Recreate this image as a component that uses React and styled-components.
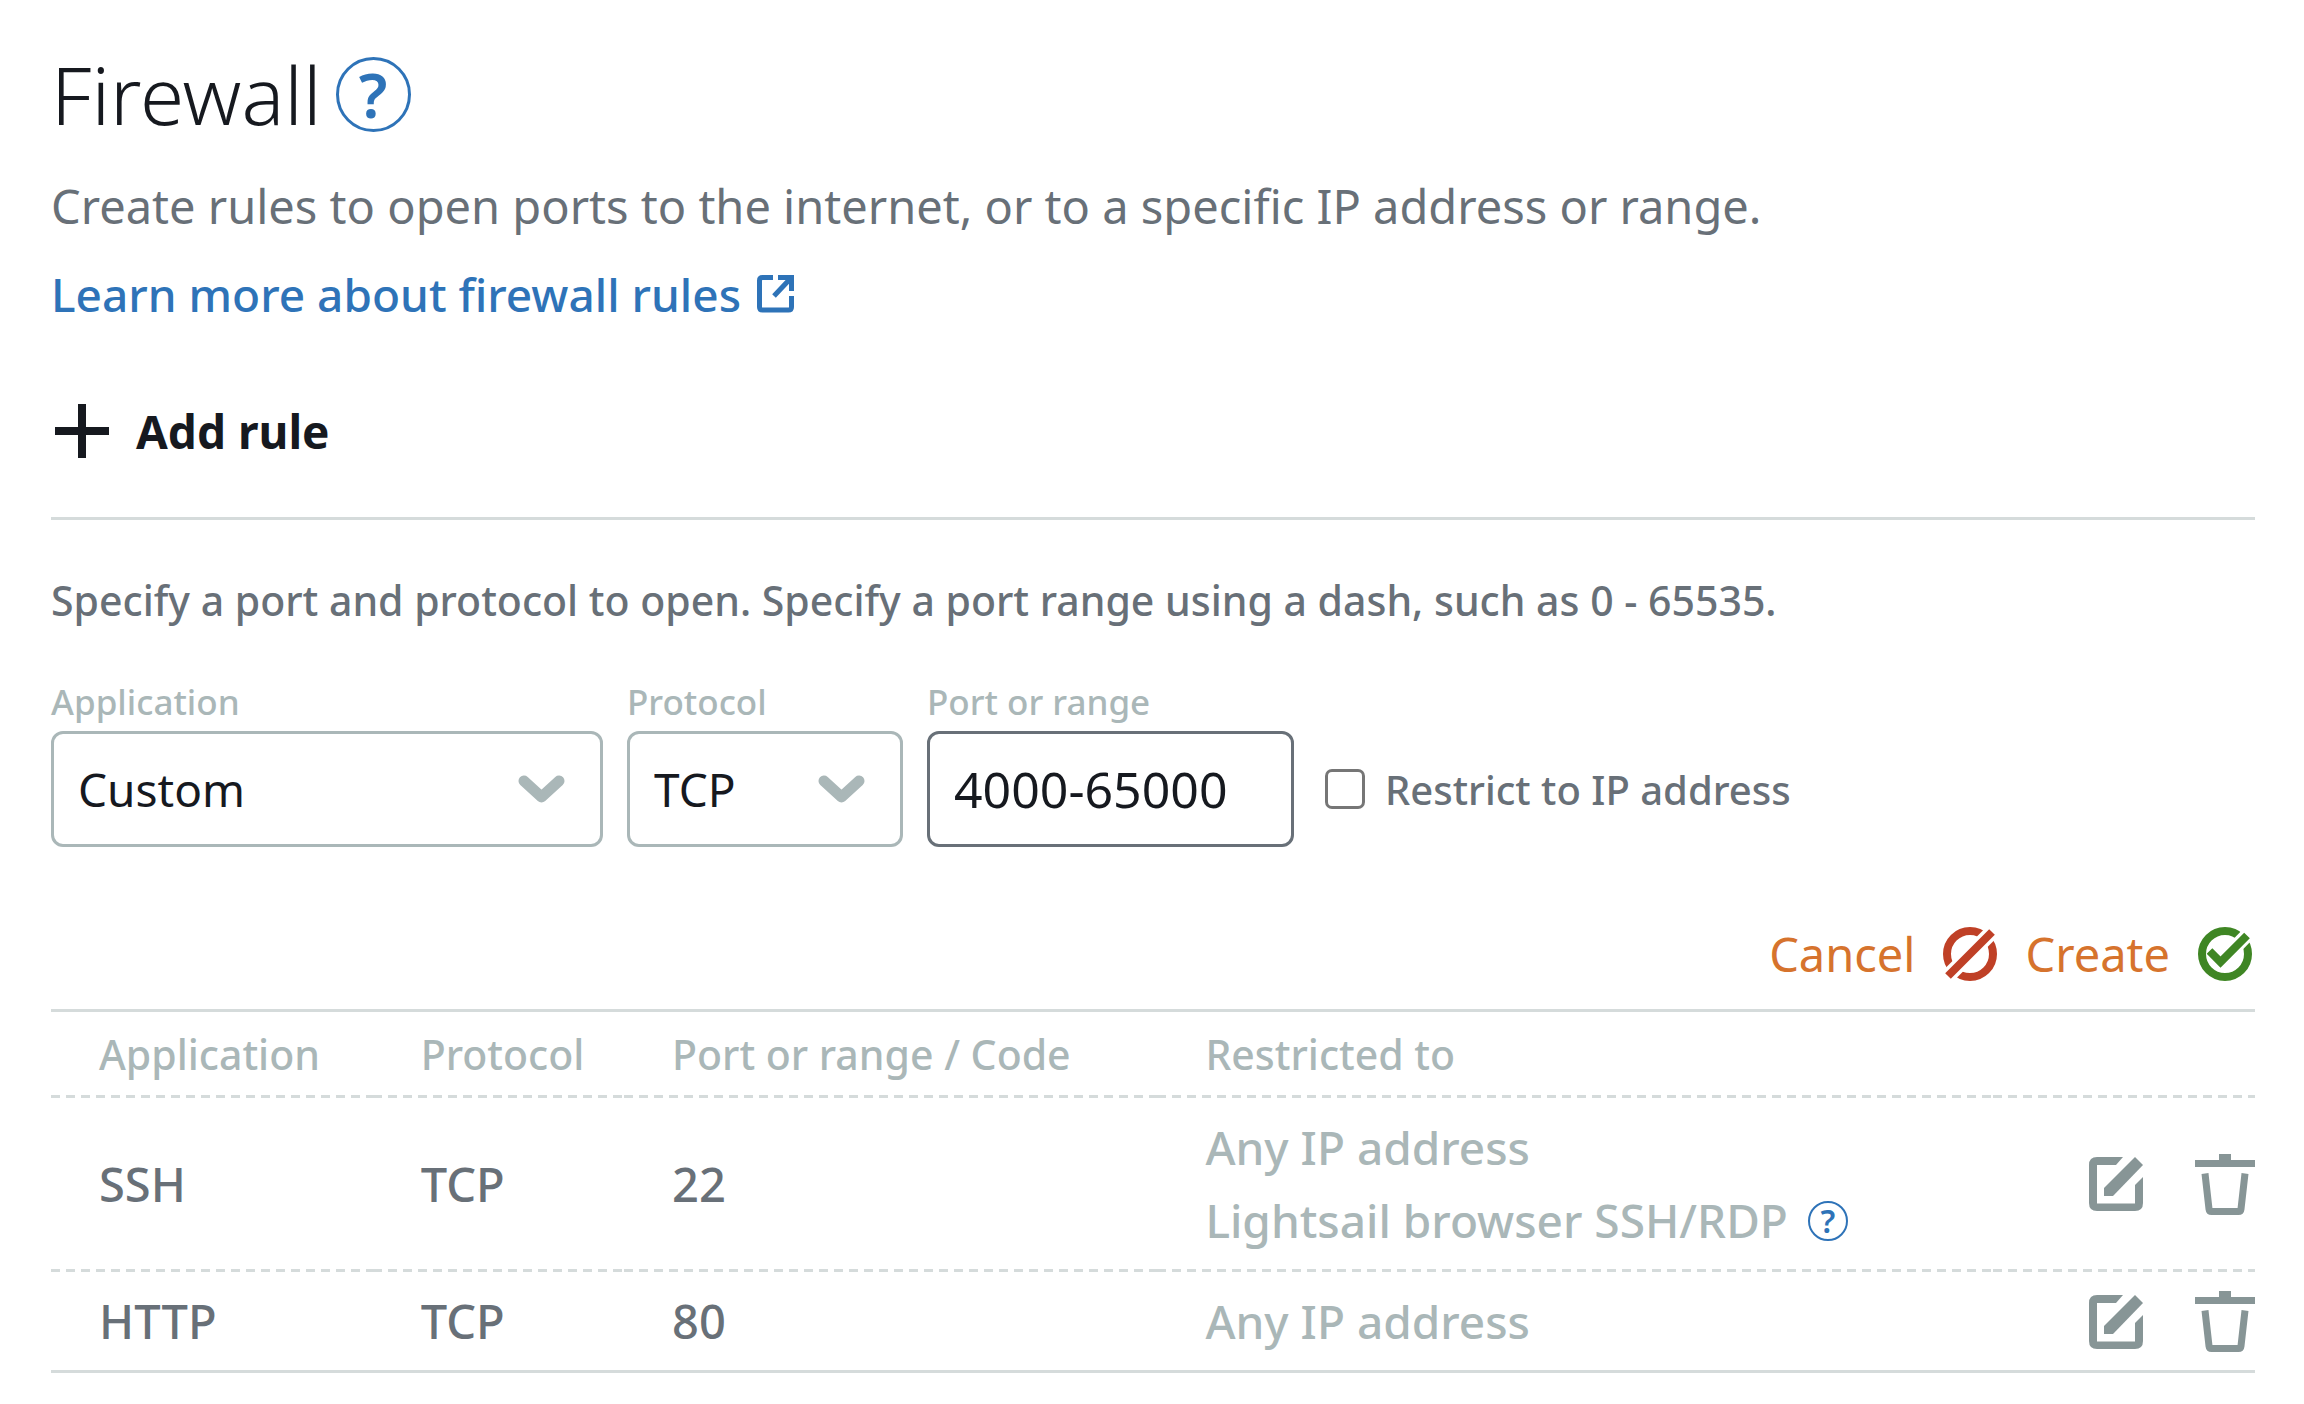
import React from "react";
import styled, { createGlobalStyle } from "styled-components";

const color = {
  ink: "#16191f",
  text: "#687078",
  muted: "#aab7b8",
  line: "#d5dbdb",
  icon: "#879596",
  blue: "#2e73b8",
  orange: "#d6732d",
  red: "#bf4026",
  green: "#3f8624",
};

const GlobalStyle = createGlobalStyle`
  *, *::before, *::after { box-sizing: border-box; }
  body {
    margin: 0;
    background: #fff;
    color: ${color.text};
    font-family: "Noto Sans", "Open Sans", sans-serif;
  }
  button, input, select { font: inherit; color: inherit; margin: 0; }
  button { padding: 0; border: 0; background: none; cursor: pointer; }
  svg { display: block; flex: none; }
`;

const Page = styled.main`
  padding: 54px 49px 31px 51px;
`;

const TitleRow = styled.header`
  display: flex;
  align-items: center;
  gap: 14px;
`;

const Title = styled.h1`
  margin: 0;
  color: ${color.ink};
  font-size: 80px;
  font-weight: 300;
  line-height: 80px;
`;

const HelpButton = styled.button`
  display: inline-flex;
  flex: none;
  align-items: center;
  justify-content: center;
  width: ${(p) => (p.$small ? 40 : 75)}px;
  height: ${(p) => (p.$small ? 40 : 75)}px;
  border: ${(p) => (p.$small ? 2 : 3)}px solid ${color.blue};
  border-radius: 50%;
  color: ${color.blue};
  font-size: ${(p) => (p.$small ? 32 : 62)}px;
  font-weight: 600;
  line-height: 1;
`;

const Intro = styled.p`
  margin: 40px 0 0;
  font-size: 47px;
  line-height: 64px;
`;

const LearnMore = styled.a`
  display: flex;
  align-items: center;
  gap: 16px;
  width: fit-content;
  margin-top: 24px;
  color: ${color.blue};
  font-size: 46px;
  font-weight: 500;
  line-height: 64px;
  text-decoration: none;
`;

const AddBar = styled.div`
  padding: 78px 0 59px;
  border-bottom: 3px solid ${color.line};
`;

const AddButton = styled.button`
  display: flex;
  align-items: center;
  gap: 27px;
  padding-left: 4px;
  color: ${color.ink};
  font-size: 46px;
  font-weight: 700;
  line-height: 54px;
`;

const Hint = styled.p`
  margin: 50px 0 49px;
  font-size: 41px;
  font-weight: 500;
  line-height: 60px;
`;

const Fields = styled.div`
  display: flex;
  align-items: flex-end;
  gap: 24px;
`;

const Field = styled.div`
  display: flex;
  flex-direction: column;
  gap: 6px;
  width: ${(p) => p.$width}px;
`;

const FieldLabel = styled.label`
  color: ${color.muted};
  font-size: 35px;
  font-weight: 500;
  line-height: 46px;
`;

const SelectBox = styled.div`
  display: grid;
  align-items: center;

  > * { grid-area: 1 / 1; }
  > svg { justify-self: end; margin-right: 38px; pointer-events: none; }
`;

const Select = styled.select`
  width: 100%;
  height: 116px;
  padding: 0 24px;
  border: 3px solid ${color.muted};
  border-radius: 12px;
  background: #fff;
  color: ${color.ink};
  font-size: 46px;
  appearance: none;
`;

const TextInput = styled.input`
  width: 100%;
  height: 116px;
  padding: 0 24px;
  border: 3px solid ${color.text};
  border-radius: 12px;
  background: #fff;
  color: ${color.ink};
  font-size: 50px;
`;

const CheckField = styled.label`
  display: flex;
  align-items: center;
  gap: 20px;
  height: 116px;
  padding-left: 7px;
  font-size: 40px;
  font-weight: 500;
`;

const Checkbox = styled.input`
  width: 40px;
  height: 40px;
  border: 3px solid #767676;
  border-radius: 7px;
  background: #fff;
  appearance: none;

  &:checked { background: ${color.blue}; }
`;

const Actions = styled.div`
  display: flex;
  justify-content: flex-end;
  gap: 28px;
  padding: 80px 3px 28px 0;
`;

const ActionButton = styled.button`
  display: flex;
  align-items: center;
  gap: 28px;
  color: ${color.orange};
  font-size: 47px;
  line-height: 54px;
`;

const RulesTable = styled.table`
  width: 100%;
  table-layout: fixed;
  border-spacing: 0;
  border-top: 3px solid ${color.line};
  border-bottom: 3px solid ${color.line};
  text-align: left;
`;

const Column = styled.col`
  width: ${(p) => p.$share};
`;

const Row = styled.tr`
  > * {
    padding: 13px 0 12px 48px;
    line-height: 73px;
  }

  &:not(:last-child) > *,
  thead & > * {
    padding-bottom: 15px;
    background: repeating-linear-gradient(to right, ${color.line} 0 9px, transparent 9px 15px)
      left bottom / 100% 3px no-repeat;
  }
`;

const HeadCell = styled.th`
  color: ${color.muted};
  font-size: 41px;
  font-weight: 500;

  ${Row} > && { line-height: 58px; }
`;

const Cell = styled.td`
  color: ${(p) => (p.$muted ? color.muted : color.text)};
  font-size: ${(p) => (p.$muted ? 46 : 47)}px;
  font-weight: 500;
`;

const Source = styled.div`
  display: flex;
  align-items: center;
  gap: 20px;
`;

const RowActions = styled.div`
  display: flex;
  align-items: center;
  justify-content: flex-end;
  gap: 52px;
  height: 73px;
`;

const PlusIcon = () => (
  <svg width="54" height="54" viewBox="0 0 54 54" fill="none" stroke="currentColor" strokeWidth="8" aria-hidden="true">
    <path d="M27 0V54M0 27H54" />
  </svg>
);

const ExternalIcon = () => (
  <svg width="38" height="38" viewBox="0 0 38 38" fill="none" stroke="currentColor" strokeWidth="5" aria-hidden="true">
    <path d="M16 2.5H5.5Q2.5 2.5 2.5 5.5V32Q2.5 35 5.5 35H31.5Q34.5 35 34.5 32V21" />
    <path d="M17 21L33 4M21 2.5H34.5V16" />
  </svg>
);

const ChevronIcon = () => (
  <svg width="47" height="28" viewBox="0 0 47 28" fill="none" stroke={color.muted} strokeWidth="11" strokeLinecap="round" strokeLinejoin="round" aria-hidden="true">
    <path d="M6 6L23.5 22L41 6" />
  </svg>
);

const CancelIcon = () => (
  <svg width="54" height="54" viewBox="0 0 54 54" fill="none" aria-hidden="true">
    <circle cx="27" cy="27" r="23" stroke={color.red} strokeWidth="8" />
    <path d="M0 54L54 0" stroke="#fff" strokeWidth="15" />
    <path d="M5 49L49 5" stroke={color.red} strokeWidth="8" />
  </svg>
);

const CreateIcon = () => (
  <svg width="54" height="54" viewBox="0 0 54 54" fill="none" aria-hidden="true">
    <circle cx="27" cy="27" r="23" stroke={color.green} strokeWidth="8" />
    <path d="M34 23.5L57 0" stroke="#fff" strokeWidth="14" />
    <path d="M11.5 24L22.5 35L49 8.5" stroke={color.green} strokeWidth="8" />
  </svg>
);

const EditIcon = () => (
  <svg width="54" height="54" viewBox="0 0 54 54" fill={color.icon} aria-hidden="true">
    <path d="M34 0H8Q0 0 0 8V46Q0 54 8 54H46Q54 54 54 46V20L46 28V46.5H8V8H27Z" />
    <path d="M46 0L54 8L24 39H15V31Z" />
  </svg>
);

const TrashIcon = () => (
  <svg width="60" height="61" viewBox="0 0 60 61" fill={color.icon} aria-hidden="true">
    <path d="M24 0H36V6H60V13H0V6H24Z" />
    <path d="M10 19.5L14 55Q14.3 57.5 16.5 57.5H43.5Q45.7 57.5 46 55L50 19.5" fill="none" stroke={color.icon} strokeWidth="7" />
  </svg>
);

const rules = [
  { app: "SSH", protocol: "TCP", port: "22", sources: [{ name: "Any IP address" }, { name: "Lightsail browser SSH/RDP", help: true }] },
  { app: "HTTP", protocol: "TCP", port: "80", sources: [{ name: "Any IP address" }] },
];

export default function App() {
  return (
    <>
      <GlobalStyle />
      <Page>
        <TitleRow>
          <Title>Firewall</Title>
          <HelpButton type="button">?</HelpButton>
        </TitleRow>
        <Intro>Create rules to open ports to the internet, or to a specific IP address or range.</Intro>
        <LearnMore href="#firewall-rules">
          Learn more about firewall rules
          <ExternalIcon />
        </LearnMore>

        <AddBar>
          <AddButton type="button">
            <PlusIcon />
            Add rule
          </AddButton>
        </AddBar>

        <form onSubmit={(e) => e.preventDefault()}>
          <Hint>Specify a port and protocol to open. Specify a port range using a dash, such as 0 - 65535.</Hint>
          <Fields>
            <Field $width={552}>
              <FieldLabel htmlFor="application">Application</FieldLabel>
              <SelectBox>
                <Select id="application" defaultValue="Custom">
                  <option>Custom</option>
                </Select>
                <ChevronIcon />
              </SelectBox>
            </Field>
            <Field $width={276}>
              <FieldLabel htmlFor="protocol">Protocol</FieldLabel>
              <SelectBox>
                <Select id="protocol" defaultValue="TCP">
                  <option>TCP</option>
                </Select>
                <ChevronIcon />
              </SelectBox>
            </Field>
            <Field $width={367}>
              <FieldLabel htmlFor="ports">Port or range</FieldLabel>
              <TextInput id="ports" type="text" defaultValue="4000-65000" />
            </Field>
            <CheckField>
              <Checkbox type="checkbox" />
              Restrict to IP address
            </CheckField>
          </Fields>
          <Actions>
            <ActionButton type="button">
              Cancel
              <CancelIcon />
            </ActionButton>
            <ActionButton type="submit">
              Create
              <CreateIcon />
            </ActionButton>
          </Actions>
        </form>

        <RulesTable>
          <colgroup>
            <Column $share="14.6%" />
            <Column $share="11.4%" />
            <Column $share="24.2%" />
            <Column $share="37.9%" />
            <Column $share="11.9%" />
          </colgroup>
          <thead>
            <Row>
              <HeadCell scope="col">Application</HeadCell>
              <HeadCell scope="col">Protocol</HeadCell>
              <HeadCell scope="col">Port or range / Code</HeadCell>
              <HeadCell scope="col">Restricted to</HeadCell>
              <Cell />
            </Row>
          </thead>
          <tbody>
            {rules.map((rule) => (
              <Row key={rule.app}>
                <Cell>{rule.app}</Cell>
                <Cell>{rule.protocol}</Cell>
                <Cell>{rule.port}</Cell>
                <Cell $muted>
                  {rule.sources.map((source) => (
                    <Source key={source.name}>
                      {source.name}
                      {source.help && <HelpButton type="button" $small>?</HelpButton>}
                    </Source>
                  ))}
                </Cell>
                <Cell>
                  <RowActions>
                    <button type="button" aria-label={`Edit ${rule.app}`}><EditIcon /></button>
                    <button type="button" aria-label={`Delete ${rule.app}`}><TrashIcon /></button>
                  </RowActions>
                </Cell>
              </Row>
            ))}
          </tbody>
        </RulesTable>
      </Page>
    </>
  );
}
